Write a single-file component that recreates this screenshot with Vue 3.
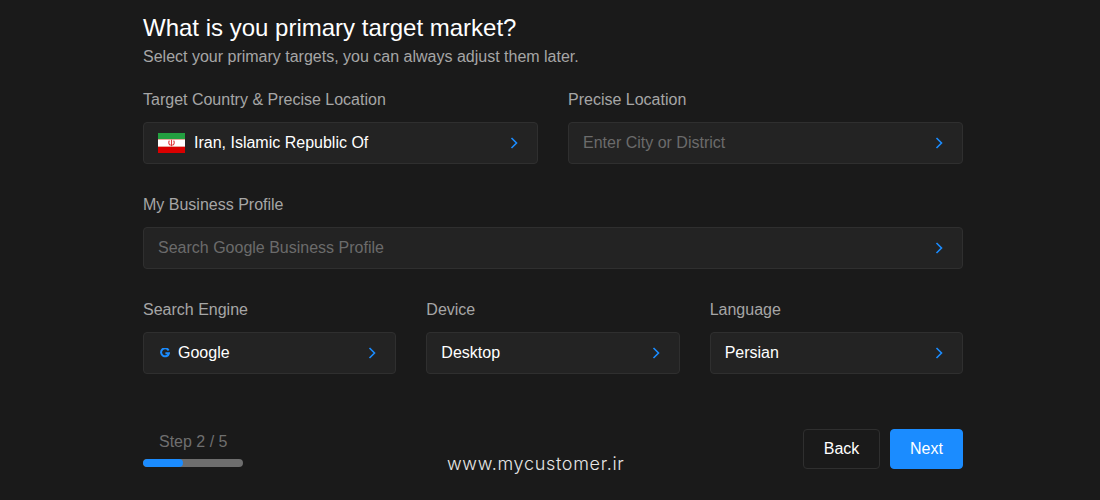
<script setup>
const topRow = [
  { label: 'Target Country & Precise Location', value: 'Iran, Islamic Republic Of', flag: true },
  { label: 'Precise Location', placeholder: 'Enter City or District' }
]
const bottomRow = [
  { label: 'Search Engine', value: 'Google', google: true },
  { label: 'Device', value: 'Desktop' },
  { label: 'Language', value: 'Persian' }
]
const rows = [
  { cls: 'two', fields: topRow },
  { cls: 'one', fields: [{ label: 'My Business Profile', placeholder: 'Search Google Business Profile' }] },
  { cls: 'three', fields: bottomRow }
]
</script>

<template>
  <main class="page">
    <h1 class="title">What is you primary target market?</h1>
    <p class="sub">Select your primary targets, you can always adjust them later.</p>

    <section class="form">
      <div v-for="row in rows" :key="row.cls" class="row" :class="row.cls">
        <div v-for="f in row.fields" :key="f.label" class="field">
          <div class="label">{{ f.label }}</div>
          <div class="select">
            <svg v-if="f.flag" class="flag" viewBox="0 0 27 20" width="27" height="20">
              <rect width="27" height="7" fill="#239f40" />
              <rect y="7" width="27" height="6" fill="#ffffff" />
              <rect y="13" width="27" height="7" fill="#da0000" />
              <path d="M0 6.5h27M0 13.5h27" stroke="#e8a9a0" stroke-width="1" />
              <path d="M13.5 6.8v6.4M11.4 7.6c-1.2 1.7-.7 3.9 1.3 4.7M15.6 7.6c1.2 1.7 .7 3.9-1.3 4.7" stroke="#e0393b" stroke-width="1.1" fill="none" />
            </svg>
            <svg v-if="f.google" class="g" viewBox="0 0 10 10" width="10" height="10">
              <path d="M8.6 2.4A4 4 0 1 0 9 5.2H5.4" fill="none" stroke="#1b8cff" stroke-width="2" />
            </svg>
            <span v-if="f.value" class="value">{{ f.value }}</span>
            <span v-else class="placeholder">{{ f.placeholder }}</span>
            <svg class="chev" viewBox="0 0 8 12" width="8" height="12">
              <path d="M1.5 1l5 5-5 5" fill="none" stroke="#1b8cff" stroke-width="1.6" />
            </svg>
          </div>
        </div>
      </div>
    </section>

    <footer class="foot">
      <div class="progress">
        <div class="step">Step 2 / 5</div>
        <div class="track"><div class="fill"></div></div>
      </div>
      <div class="actions">
        <button class="btn back">Back</button>
        <button class="btn next">Next</button>
      </div>
      <div class="mark">www.mycustomer.ir</div>
    </footer>
  </main>
</template>

<style>
html, body { margin: 0; background: #1a1a1a; }
</style>

<style scoped>
.page {
  box-sizing: border-box;
  width: 1100px;
  height: 500px;
  padding: 14px 137px 0 143px;
  background: #1a1a1a;
  font-family: "Liberation Sans", Arial, sans-serif;
  overflow: hidden;
}
.title {
  margin: 0;
  font-size: 24px;
  line-height: 28px;
  font-weight: 400;
  color: #ffffff;
}
.sub {
  margin: 6px 0 0;
  font-size: 16px;
  line-height: 18px;
  color: #a6a6a6;
}
.form {
  display: flex;
  flex-direction: column;
  gap: 32px;
  margin-top: 25px;
}
.row { display: grid; gap: 30px; }
.two { grid-template-columns: 1fr 1fr; }
.one { grid-template-columns: 1fr; }
.three { grid-template-columns: 1fr 1fr 1fr; }
.label {
  font-size: 16px;
  line-height: 18px;
  color: #a6a6a6;
  margin-bottom: 13px;
}
.select {
  box-sizing: border-box;
  height: 42px;
  display: flex;
  align-items: center;
  padding: 0 19px 0 14px;
  background: #232323;
  border: 1px solid #2f2f2f;
  border-radius: 4px;
  font-size: 16px;
}
.flag { margin-right: 9px; flex: none; }
.g { margin: 0 8px 0 2px; flex: none; }
.value { color: #ffffff; flex: 1; }
.placeholder { color: #6b6b6b; flex: 1; }
.chev { flex: none; }
.foot {
  position: relative;
  display: flex;
  justify-content: space-between;
  align-items: flex-start;
  margin-top: 55px;
}
.progress { width: 100px; padding-top: 4px; }
.step {
  font-size: 16px;
  line-height: 18px;
  color: #6f6f6f;
  padding-left: 16px;
}
.track {
  height: 8px;
  margin-top: 8px;
  border-radius: 4px;
  background: #6e6e6e;
  overflow: hidden;
}
.fill {
  width: 40%;
  height: 100%;
  border-radius: 4px;
  background: #1b8cff;
}
.actions { display: flex; gap: 10px; }
.btn {
  box-sizing: border-box;
  height: 40px;
  border-radius: 4px;
  font-family: inherit;
  font-size: 16px;
  color: #ffffff;
}
.back { width: 77px; background: transparent; border: 1px solid #2f2f2f; }
.next { width: 73px; background: #1b8cff; border: 1px solid #1b8cff; }
.mark {
  position: absolute;
  left: 304px;
  top: 24px;
  font-family: Inter, sans-serif;
  font-size: 18px;
  font-weight: 300;
  line-height: 22px;
  letter-spacing: 0.68px;
  color: #e6e6e6;
}
</style>
